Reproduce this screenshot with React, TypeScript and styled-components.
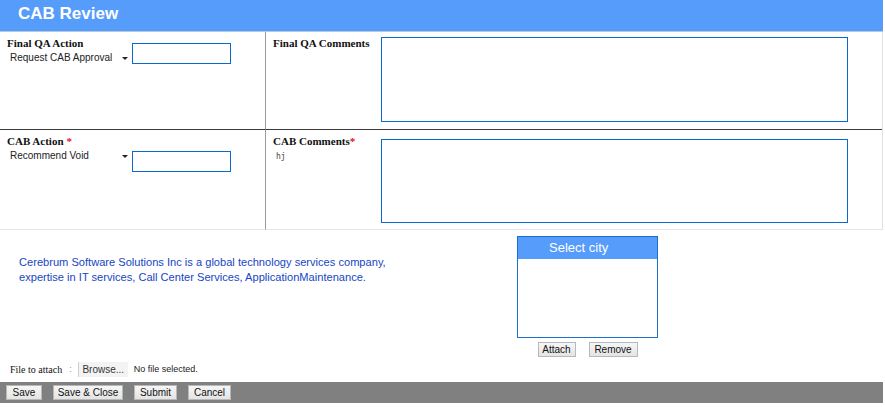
import styled, { createGlobalStyle } from "styled-components";

const GlobalStyle = createGlobalStyle`
  body {
    margin: 0;
    background: #ffffff;
    font-family: "Liberation Sans", Arial, sans-serif;
  }
`;

const Page = styled.div`
  width: 883px;
  display: flex;
  flex-direction: column;
`;

const Header = styled.div`
  height: 31px;
  background-color: #569cfb;
  border-bottom: 1px solid #b9c9dd;
  padding-left: 18px;
  color: #ffffff;
  font-size: 17px;
  font-weight: bold;
  line-height: 27px;
`;

const FormGrid = styled.div`
  display: grid;
  grid-template-columns: 266px 1fr;
  grid-template-rows: 98px 100px;
  border-right: 1px solid #e2e2e2;
`;

const Cell = styled.div<{ side: "left" | "right"; row: 1 | 2 }>`
  display: flex;
  align-items: flex-start;
  padding-left: 7px;
  border-right: ${(p) => (p.side === "left" ? "1px solid #9a9a9a" : "none")};
  border-bottom: ${(p) => (p.row === 1 ? "1px solid #3a3a3a" : "1px solid #e6e6e6")};
`;

const FieldColumn = styled.div<{ width: number }>`
  width: ${(p) => p.width}px;
  display: flex;
  flex-direction: column;
  padding-top: 5px;
`;

const Label = styled.div`
  font-family: "Liberation Serif", "Times New Roman", serif;
  font-weight: bold;
  font-size: 11px;
  line-height: 12px;
  color: #111;
`;

const Req = styled.span<{ gap: number }>`
  color: #e01010;
  margin-left: ${(p) => p.gap}px;
`;

const FakeSelect = styled.div`
  position: relative;
  margin-top: 2px;
  padding-left: 3px;
  width: 118px;
  font-size: 10px;
  line-height: 14px;
  color: #222;
  &::after {
    content: "";
    position: absolute;
    right: 0;
    top: 6px;
    border-left: 3px solid transparent;
    border-right: 3px solid transparent;
    border-top: 3px solid #222;
  }
`;

const TextInput = styled.input<{ offset: number }>`
  margin-top: ${(p) => p.offset}px;
  width: 99px;
  height: 21px;
  box-sizing: border-box;
  border: 1px solid #0b6ad0;
  outline: none;
  padding: 0 3px;
`;

const Comments = styled.textarea<{ offset: number; h: number }>`
  margin-top: ${(p) => p.offset}px;
  width: 467px;
  height: ${(p) => p.h}px;
  box-sizing: border-box;
  border: 1px solid #0b6ad0;
  outline: none;
  resize: none;
  padding: 2px;
`;

const MonoValue = styled.div`
  margin-top: 5px;
  padding-left: 3px;
  font-family: "DejaVu Sans Mono", monospace;
  font-size: 8px;
  color: #444;
`;

const InfoSection = styled.div`
  height: 130px;
  display: flex;
`;

const Blurb = styled.div`
  width: 498px;
  padding: 25px 0 0 19px;
  font-size: 11.1px;
  line-height: 15px;
  color: #1646c4;
`;

const CityColumn = styled.div`
  display: flex;
  flex-direction: column;
  align-items: center;
  padding-top: 6px;
  width: 141px;
`;

const CityBox = styled.div`
  width: 141px;
  height: 102px;
  box-sizing: border-box;
  border: 1px solid #1a6fd0;
`;

const CityHead = styled.div`
  height: 22px;
  background-color: #569cfb;
  color: #ffffff;
  font-size: 13px;
  line-height: 21px;
  padding-left: 31px;
`;

const SmallButtons = styled.div`
  display: flex;
  gap: 13px;
  margin-top: 4px;
`;

const Btn = styled.button<{ w: number }>`
  width: ${(p) => p.w}px;
  height: 15px;
  padding: 0;
  font-family: "Liberation Sans", Arial, sans-serif;
  font-size: 10px;
  line-height: 13px;
  color: #111;
  background: linear-gradient(#f6f6f6, #e4e4e4);
  border: 1px solid #b8b8b8;
  border-radius: 0;
`;

const FileRow = styled.div`
  height: 18px;
  display: flex;
  align-items: center;
  padding-left: 10px;
  font-size: 9px;
  color: #222;
`;

const FileLabel = styled.span`
  font-family: "Liberation Serif", "Times New Roman", serif;
  font-size: 10px;
  color: #111;
`;

const Colon = styled.span`
  color: #999;
  margin: 0 6px 0 7px;
`;

const Browse = styled.span`
  display: inline-block;
  width: 49px;
  height: 15px;
  line-height: 15px;
  text-align: center;
  background: #f3f3f3;
  border-left: 1px solid #cfcfcf;
  color: #333;
  margin-right: 6px;
  font-size: 10px;
`;

const Footer = styled.div`
  margin-top: 4px;
  height: 21px;
  background-color: #808080;
  display: flex;
  align-items: center;
  gap: 11px;
  padding-left: 6px;
`;

export default function App() {
  return (
    <Page>
      <GlobalStyle />
      <Header>CAB Review</Header>
      <FormGrid>
        <Cell side="left" row={1}>
          <FieldColumn width={125}>
            <Label>Final QA Action</Label>
            <FakeSelect>Request CAB Approval</FakeSelect>
          </FieldColumn>
          <TextInput offset={11} />
        </Cell>
        <Cell side="right" row={1}>
          <FieldColumn width={108}>
            <Label>Final QA Comments</Label>
          </FieldColumn>
          <Comments offset={5} h={85} />
        </Cell>
        <Cell side="left" row={2}>
          <FieldColumn width={125}>
            <Label>
              CAB Action<Req gap={3}>*</Req>
            </Label>
            <FakeSelect>Recommend Void</FakeSelect>
          </FieldColumn>
          <TextInput offset={21} />
        </Cell>
        <Cell side="right" row={2}>
          <FieldColumn width={108}>
            <Label>
              CAB Comments<Req gap={0}>*</Req>
            </Label>
            <MonoValue>hj</MonoValue>
          </FieldColumn>
          <Comments offset={9} h={84} />
        </Cell>
      </FormGrid>
      <InfoSection>
        <Blurb>
          Cerebrum Software Solutions Inc is a global technology services company,
          <br />
          expertise in IT services, Call Center Services, ApplicationMaintenance.
        </Blurb>
        <CityColumn>
          <CityBox>
            <CityHead>Select city</CityHead>
          </CityBox>
          <SmallButtons>
            <Btn w={38}>Attach</Btn>
            <Btn w={49}>Remove</Btn>
          </SmallButtons>
        </CityColumn>
      </InfoSection>
      <FileRow>
        <FileLabel>File to attach</FileLabel>
        <Colon>:</Colon>
        <Browse>Browse...</Browse>
        No file selected.
      </FileRow>
      <Footer>
        <Btn w={36}>Save</Btn>
        <Btn w={70}>Save &amp; Close</Btn>
        <Btn w={43}>Submit</Btn>
        <Btn w={43}>Cancel</Btn>
      </Footer>
    </Page>
  );
}
